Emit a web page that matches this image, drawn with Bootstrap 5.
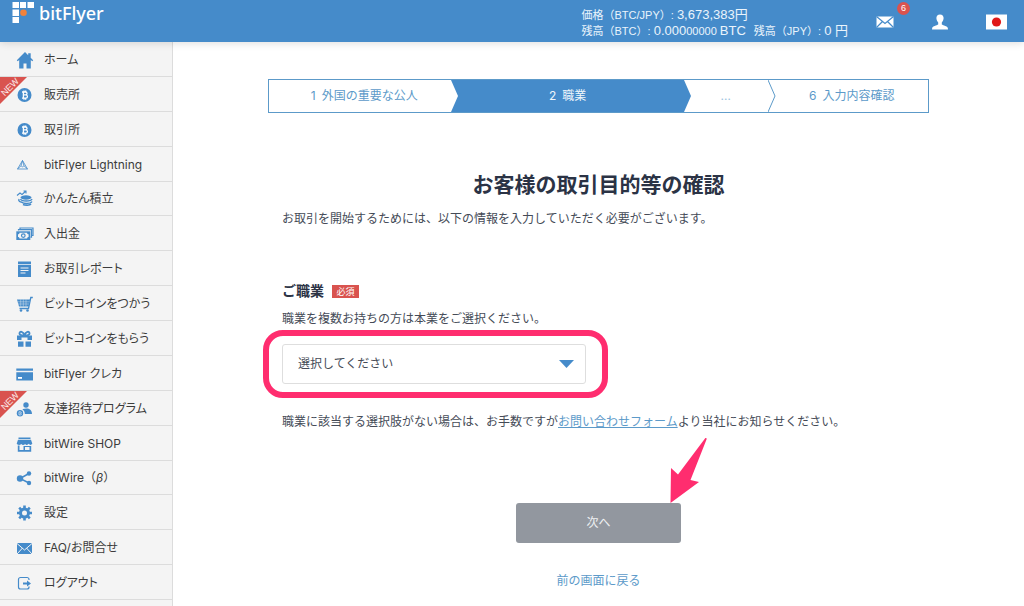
<!DOCTYPE html>
<html lang="ja">
<head>
<meta charset="utf-8">
<meta name="viewport" content="width=device-width, initial-scale=1">
<title>お客様の取引目的等の確認 | bitFlyer</title>
<link href="https://cdn.jsdelivr.net/npm/bootstrap@5.3.0/dist/css/bootstrap.min.css" rel="stylesheet">
<style>
:root { --bf-blue: #458bca; --bf-line: #5c9ac9; --bf-ink: #454b57; --bf-red: #d9534f; --bf-pink: #ff2d6f; }
body { font-family: Inter, "Noto Sans CJK JP", sans-serif; font-size: 12px; line-height: 20px; color: var(--bf-ink); }
a { color: var(--bf-line); }
.topbar { background: var(--bf-blue); height: 42px; box-shadow: 0 1px 8px rgba(0,0,0,.14); z-index: 3; }
.brand-link { font-family: "Noto Sans", sans-serif; font-size: 18px; font-weight: 500; line-height: 26px; padding-left: 12px; gap: 5px; }
.rates { font-family: "Liberation Sans", "Noto Sans CJK JP", sans-serif; font-size: 11px; line-height: 16px; color: #eaf4fc; }
.rates b { font-size: 13px; font-weight: 400; }
.rates small { font-size: 11px; }
.head-tools { gap: 37px; padding: 2px 17px 0 28px; }
.count-badge { left: 21px; top: -14px; width: 13px; height: 13px; background: var(--bf-red); font: 400 9px/13px "Liberation Sans", sans-serif; }
.side { width: 173px; background: #f4f4f4; border-right: 1px solid #dcdcdc; padding-bottom: 6px; }
.side-item { border-bottom: 1px solid #dcdcdc; padding: 2px 0 0 16px; gap: 10px; min-height: 28px; font-size: 12px; color: #3c3c3c; font-feature-settings: "palt"; }
.side-item > svg:first-child { flex: none; width: 18px; height: 18px; color: var(--bf-blue); }
.full-width-kana { font-feature-settings: normal; }
.ribbon { left: 0; top: 0; width: 27px; height: 27px; }
.page { padding: 37px 16px 12px; }
.steps { width: 100%; max-width: 661px; border: 1px solid var(--bf-line); height: 34px; color: var(--bf-line); }
.step { position: relative; flex-basis: 0; }
.step svg { position: absolute; right: -8px; top: 0; width: 8px; height: 32px; z-index: 1; }
.step-now { background: var(--bf-blue); color: #eef6fc; }
.step-more { color: #9cc3e0; }
.form-col { width: 100%; max-width: 633px; }
.title { font-size: 21px; line-height: 30px; font-weight: 700; color: #2b3345; margin: 57px 0 9px; }
.field-label { font-size: 14px; font-weight: 700; color: #2b3345; }
.req { background: var(--bf-red); font-size: 9px; line-height: 13px; width: 27px; }
.pick { position: relative; max-width: 304px; margin: 15px 0 28px; }
.pick::after { content: ""; position: absolute; inset: -14px -22px -14px -19px; border: 6px solid var(--bf-pink); border-radius: 20px; pointer-events: none; }
.pick .form-select { height: 40px; padding: 0 36px 0 15px; font-size: 12px; color: var(--bf-ink); border-color: #dedede; border-radius: 3px;
  background: #fff url("data:image/svg+xml,%3Csvg xmlns='http://www.w3.org/2000/svg' viewBox='0 0 15 8'%3E%3Cpath d='M0 0h15L7.500 8z' fill='%23458bca'/%3E%3C/svg%3E") no-repeat right 11px center / 15px 8px; }
.next-wrap { margin: 71px 0 28px; width: 165px; }
.btn-next { height: 40px; font-size: 12px; border: 0; border-radius: 3px; }
.btn-next:disabled { background: #92979f; color: #eef0f2; opacity: 1; }
.pointer-arrow { left: 153px; top: -66px; width: 39px; height: 66px; }
</style>
</head>
<body>
<div class="min-vh-100 d-flex flex-column">
  <header class="topbar d-flex justify-content-between position-relative text-white">
    <a href="#" class="brand-link d-flex text-white text-decoration-none">
      <svg width="22" height="24" viewBox="0 0 22 24" fill="#fff" aria-hidden="true"><path d="M.5 2H7v6H.5zM8 2h6v6H8zM15.500 2H22v6h-6.500zM.5 9.500H7V16H.5zM.5 17H7v6H.5z"/><circle cx="11.500" cy="12.800" r="3.300" fill="#f0823c"/></svg>
      <span>bitFlyer</span>
    </a>
    <div class="d-flex align-items-center">
      <div class="rates pt-1">
        <div>価格（BTC/JPY）: <b>3,673,383円</b></div>
        <div>残高（BTC）: <b>0.000</b><small>00000</small> <b>BTC</b><span class="ms-2">残高（JPY）: <b>0 円</b></span></div>
      </div>
      <div class="head-tools d-flex align-items-center">
        <a href="#" class="position-relative d-flex" aria-label="メッセージ">
          <svg width="18" height="12" viewBox="0 0 18 12"><path fill="#fff" d="M.5.500h17v11H.5z"/><path d="M.5.500 9 7.500 17.500.500M.5 11.500 6.500 5.500M17.500 11.500l-6-6" fill="none" stroke="#458bca" stroke-width="1.200"/></svg>
          <span class="count-badge position-absolute rounded-circle text-center text-white">6</span>
        </a>
        <a href="#" class="d-flex" aria-label="アカウント">
          <svg width="18" height="16" viewBox="0 0 18 16" fill="#fff"><path d="M9 .500c2.400 0 3.600 1.500 3.600 3.600 0 1.800-.8 3.400-1.800 4.400v2c1.400 1 5.600 1.600 6 3.400l.2 1.600H1l.2-1.600c.4-1.800 4.600-2.400 6-3.400v-2c-1-1-1.800-2.600-1.800-4.400C5.400 2 6.600.500 9 .500z"/></svg>
        </a>
        <a href="#" class="d-flex" aria-label="日本語">
          <svg width="21" height="16" viewBox="0 0 21 16"><path fill="#fff" d="M0 .500h21v15H0z"/><circle cx="10.500" cy="8" r="4.600" fill="#e01818"/></svg>
        </a>
      </div>
    </div>
  </header>

  <div class="d-flex flex-grow-1">
    <nav class="side d-flex flex-column flex-shrink-0" aria-label="メニュー">
      <a href="#" class="side-item d-flex align-items-center flex-fill text-decoration-none position-relative">
        <svg viewBox="0 0 18 18" fill="currentColor"><path d="M9 1 .8 9.200l.9 1L3.200 9v8.500h4.300v-5h3v5h4.300V9l1.500 1.200.9-1-2.500-2.500V2.200h-2.500v2z"/></svg>ホーム</a>
      <a href="#" class="side-item d-flex align-items-center flex-fill text-decoration-none position-relative">
        <svg viewBox="0 0 18 18"><circle cx="8.500" cy="9" r="7" fill="currentColor"/><path d="M6 6h3.600c1.900 0 1.900 2.700 0 2.900H7.500h2.300c2.200.1 2.200 3.300 0 3.300H6M7.400 6v6M8 4.500V6M9.700 4.500V6M8 12.200v1.500M9.700 12.200v1.500" fill="none" stroke="#fff" stroke-width="1.300"/></svg>販売所
        <svg class="ribbon position-absolute" viewBox="0 0 27 27"><path d="M0 0h27L0 27z" fill="#d9534f"/><text x="10" y="13" transform="rotate(-45 10 10)" text-anchor="middle" font-family="Liberation Sans, sans-serif" font-size="9" fill="#fbeceb">NEW</text></svg></a>
      <a href="#" class="side-item d-flex align-items-center flex-fill text-decoration-none position-relative">
        <svg viewBox="0 0 18 18"><circle cx="8.500" cy="9" r="7" fill="currentColor"/><path d="M6 6h3.600c1.900 0 1.900 2.700 0 2.900H7.500h2.300c2.200.1 2.200 3.300 0 3.300H6M7.400 6v6M8 4.500V6M9.700 4.500V6M8 12.200v1.500M9.700 12.200v1.500" fill="none" stroke="#fff" stroke-width="1.300"/></svg>取引所</a>
      <a href="#" class="side-item d-flex align-items-center flex-fill text-decoration-none position-relative">
        <svg viewBox="0 0 18 18" fill="none" stroke="currentColor" stroke-width=".8"><path d="M6.500 4.500 1.500 13h10L6.500 4.500zM6.500 4.500 5 9.800M6.500 4.500 8 9.800M1.500 13 5 9.800l1.500 1 1.500-1 3.500 3.200"/></svg>bitFlyer Lightning</a>
      <a href="#" class="side-item d-flex align-items-center flex-fill text-decoration-none position-relative">
        <svg viewBox="0 0 18 18" fill="none" stroke="currentColor"><path d="m1 5.500 3-2.500 2 1.500 4-3.500M7.500 1H10v2.500" stroke-width="1.100"/><ellipse cx="10" cy="7.500" rx="5.500" ry="2.200" fill="currentColor" stroke="none"/><path d="M4.500 9c1 2.700 10.500 2.700 11.500 0M3 9c-1 2.500 1.500 3 3 3.300M5.500 12c2 2 9 2 10.500-.5M7 14.500c2 1 7 1 8-.5" stroke-width="1.400"/></svg>かんたん積立</a>
      <a href="#" class="side-item d-flex align-items-center flex-fill text-decoration-none position-relative">
        <svg viewBox="0 0 18 18" fill="none" stroke="currentColor"><path d="M2.500 5.500V4.700h13v7.500h-1M4 4.200V3h13v7.500h-1" stroke-width="1.200"/><path d="M.3 6.300h14v8.700H.3z" fill="currentColor" stroke="none"/><path d="M3.500 7.800h7.600c0 1 .7 1.500 1.500 1.500v2.700c-.8 0-1.500.5-1.500 1.500H3.500c0-1-.7-1.500-1.500-1.500V9.300c.8 0 1.500-.5 1.500-1.500z" fill="#f4f4f4" stroke="none"/><circle cx="7.300" cy="10.600" r="1.800" stroke-width="1.200"/></svg>入出金</a>
      <a href="#" class="side-item d-flex align-items-center flex-fill text-decoration-none position-relative">
        <svg viewBox="0 0 18 18"><path d="M2 1.500h13V4H2zM2 4.800h13v12.200H2z" fill="currentColor"/><path d="M4.500 8h8M4.500 10.500h8M4.500 13h5" stroke="#f4f4f4" stroke-width="1.100"/></svg>お取引レポート</a>
      <a href="#" class="side-item d-flex align-items-center flex-fill text-decoration-none position-relative">
        <svg viewBox="0 0 18 18"><path d="M1 4.500h13l-1.300 7H3z" fill="currentColor"/><path d="M16.800 2.500h-2L12.500 13.500H3.500" fill="none" stroke="currentColor" stroke-width="1.300"/><path d="M1.500 6.800h12M2 9h11M4.700 4.500v7M7.300 4.500v7M10 4.500v7" stroke="#f4f4f4" stroke-width=".4"/><circle cx="5" cy="15.500" r="1.300" fill="currentColor"/><circle cx="11.500" cy="15.500" r="1.300" fill="currentColor"/></svg>ビットコインをつかう</a>
      <a href="#" class="side-item d-flex align-items-center flex-fill text-decoration-none position-relative">
        <svg viewBox="0 0 18 18"><path d="M1 5.500h15V10h-4.500V7.500h-6V10H1zM2 11.500h5.500v5.300H2zM9.500 11.500H15v5.300H9.500z" fill="currentColor"/><path d="M8.500 5.500C7.500 1.500 3.500.500 3.500 3.500c0 1.500 2.500 2 5 2 2.500 0 5-.5 5-2 0-3-4-2-5 2z" fill="none" stroke="currentColor" stroke-width="1.900"/></svg>ビットコインをもらう</a>
      <a href="#" class="side-item d-flex align-items-center flex-fill text-decoration-none position-relative">
        <svg viewBox="0 0 18 18"><path d="M.3 3.500h16.700v2.200H.3zM.3 7.200h16.700v8.300H.3z" fill="currentColor"/><path d="M2 12h4v1.800H2z" fill="#fff"/></svg>bitFlyer クレカ</a>
      <a href="#" class="side-item d-flex align-items-center flex-fill text-decoration-none position-relative">
        <svg viewBox="0 0 18 18"><circle cx="10" cy="5" r="2.700" fill="currentColor"/><path d="M7 9c4-1.200 9-.8 9 5H8.800C8.800 11.500 8 10.200 6.500 9.700z" fill="currentColor"/><circle cx="4" cy="13.300" r="3.200" fill="currentColor"/><path d="M3 11.800h1.500c1 0 1 1.500 0 1.500 1.200 0 1.200 1.600 0 1.600H3z" fill="none" stroke="#fff" stroke-width=".6"/></svg>友達招待プログラム
        <svg class="ribbon position-absolute" viewBox="0 0 27 27"><path d="M0 0h27L0 27z" fill="#d9534f"/><text x="10" y="13" transform="rotate(-45 10 10)" text-anchor="middle" font-family="Liberation Sans, sans-serif" font-size="9" fill="#fbeceb">NEW</text></svg></a>
      <a href="#" class="side-item d-flex align-items-center flex-fill text-decoration-none position-relative">
        <svg viewBox="0 0 18 18"><path d="M2.500 2.500h12V4h-12zM2 4.800h13l1.300 4c-1 1.500-2.600 1.500-3.600 0-1 1.500-2.600 1.500-3.600.2-1 1.300-3 1.300-3.800 0C4 10.300 1.700 10.300.7 8.800zM1.800 10.500h1.700V15h4v-4h7.700v5.700H1.800z" fill="currentColor"/><path d="M9 12h4.500v3H9z" fill="#f4f4f4"/></svg>bitWire SHOP</a>
      <a href="#" class="side-item full-width-kana d-flex align-items-center flex-fill text-decoration-none position-relative">
        <svg viewBox="0 0 18 18"><path d="M13 4.500 4 9.500l9 4.500" fill="none" stroke="currentColor" stroke-width="1.500"/><g fill="currentColor"><circle cx="4" cy="9.500" r="3.200"/><circle cx="13" cy="4.500" r="2.200"/><circle cx="13" cy="14" r="2.200"/></g></svg><span>bitWire（<i>β</i>）</span></a>
      <a href="#" class="side-item d-flex align-items-center flex-fill text-decoration-none position-relative">
        <svg viewBox="0 0 18 18" fill="none" stroke="currentColor"><circle cx="8.500" cy="9" r="4" stroke-width="3"/><path d="M8.500 1.500v3M8.500 13.500v3M1 9h3M13 9h3M3.200 3.700l2.100 2.100M11.700 12.200l2.100 2.100M3.200 14.300l2.100-2.100M11.700 5.800l2.100-2.100" stroke-width="2.600"/></svg>設定</a>
      <a href="#" class="side-item d-flex align-items-center flex-fill text-decoration-none position-relative">
        <svg viewBox="0 0 18 18"><path d="M1 4h15v11H1z" fill="currentColor"/><path d="m1 4.500 7.500 6.500L16 4.500M1 15l5.500-6M16 15l-5.500-6" fill="none" stroke="#f4f4f4"/></svg>FAQ/お問合せ</a>
      <a href="#" class="side-item d-flex align-items-center flex-fill text-decoration-none position-relative">
        <svg viewBox="0 0 18 18"><path d="M13 6V5.500a2 2 0 0 0-2-2H4.500a2 2 0 0 0-2 2V13a2 2 0 0 0 2 2H11a2 2 0 0 0 2-2v-.5" fill="none" stroke="currentColor" stroke-width="1.200"/><path d="M7 8.500h4v-2l4 3-4 3v-2H7z" fill="currentColor"/></svg>ログアウト</a>
    </nav>

    <main class="page flex-grow-1 d-flex flex-column align-items-center">
      <div class="steps d-flex text-center">
        <div class="step d-flex align-items-center justify-content-center" style="flex-grow:183"><span class="ps-2">1&ensp;外国の重要な公人</span><svg viewBox="0 0 8 32"><path d="M0 0l7 16-7 16z" fill="#fff"/></svg></div>
        <div class="step step-now d-flex align-items-center justify-content-center" style="flex-grow:233"><span>2&ensp;職業</span><svg viewBox="0 0 8 32"><path d="M0 0l7 16-7 16z" fill="#458bca"/></svg></div>
        <div class="step step-more d-flex align-items-center justify-content-center" style="flex-grow:84"><span>…</span><svg viewBox="0 0 8 32"><path d="M0 0l7 16-7 16" fill="none" stroke="#5c9ac9"/></svg></div>
        <div class="step d-flex align-items-center justify-content-center" style="flex-grow:161"><span class="ps-2">6&ensp;入力内容確認</span></div>
      </div>

      <form class="form-col d-flex flex-column" onsubmit="return false">
        <h1 class="title text-center">お客様の取引目的等の確認</h1>
        <p class="mb-5">お取引を開始するためには、以下の情報を入力していただく必要がございます。</p>
        <div class="d-flex align-items-center gap-2 mt-1 mb-2">
          <label for="job" class="field-label">ご職業</label>
          <span class="req text-white text-center">必須</span>
        </div>
        <p class="m-0">職業を複数お持ちの方は本業をご選択ください。</p>
        <div class="pick">
          <select id="job" class="form-select"><option>選択してください</option></select>
        </div>
        <p class="m-0">職業に該当する選択肢がない場合は、お手数ですが<a href="#">お問い合わせフォーム</a>より当社にお知らせください。</p>
        <div class="next-wrap position-relative align-self-center">
          <button type="submit" class="btn btn-next w-100" disabled>次へ</button>
          <svg class="pointer-arrow position-absolute" viewBox="0 0 39 66" aria-hidden="true"><path d="M1.500 66 2 31l7 6.500L36 1.500c1-1 2 0 1.500 1L21.500 43l8.500 2z" fill="#ff2d6f"/></svg>
        </div>
        <a href="#" class="align-self-center text-decoration-none">前の画面に戻る</a>
      </form>
    </main>
  </div>
</div>
</body>
</html>
